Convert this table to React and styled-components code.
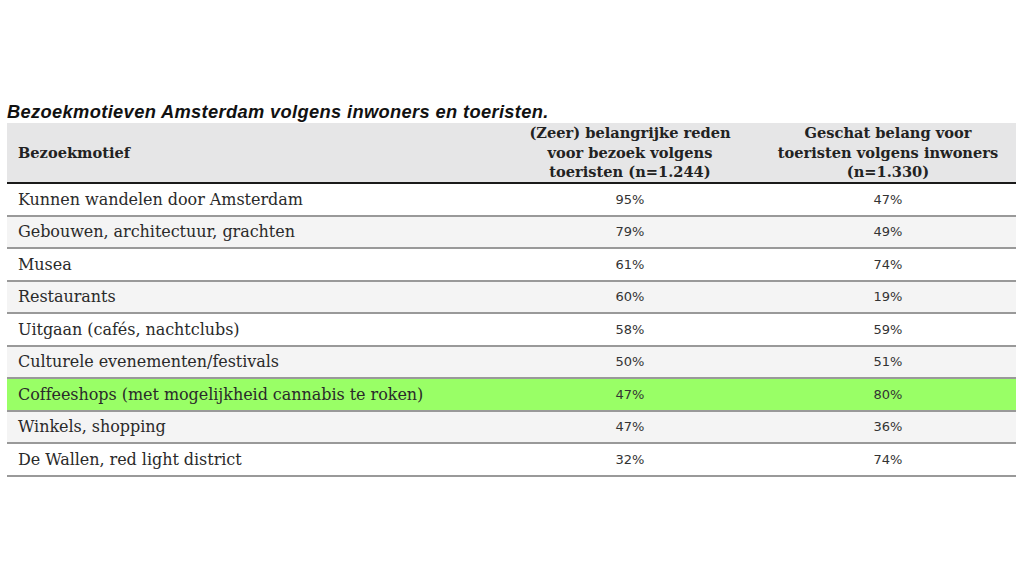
import React from "react";
import styled, { createGlobalStyle } from "styled-components";

const Global = createGlobalStyle`
  html, body { margin: 0; padding: 0; background: #fff; }
  body { width: 1030px; height: 580px; overflow: hidden; }
`;

const Page = styled.div`
  padding: 102px 14px 0 7px;
`;

const Title = styled.div`
  font-family: "Liberation Sans", Arial, sans-serif;
  font-weight: bold;
  font-style: italic;
  font-size: 18.3px;
  line-height: 20px;
  letter-spacing: 0.35px;
  color: #111;
  margin-bottom: 1px;
`;

const Table = styled.table`
  width: 1009px;
  border-collapse: collapse;
  table-layout: fixed;
`;

const HeadRow = styled.tr`
  background: #e6e6e7;
  border-bottom: 2px solid #1a1a1a;
`;

const Th = styled.th`
  font-family: "DejaVu Serif", "Liberation Serif", serif;
  font-weight: bold;
  font-size: 14.6px;
  line-height: 19.5px;
  color: #222;
  text-align: ${(p) => (p.$left ? "left" : "center")};
  padding: ${(p) => (p.$left ? "0 0 0 11px" : "0")};
  height: 59px;
  vertical-align: middle;
`;

const Row = styled.tr`
  background: ${(p) => (p.$hl ? "#99ff66" : p.$alt ? "#f4f4f4" : "#fff")};
  border-bottom: 2px solid #999;
`;

const Label = styled.td`
  font-family: "DejaVu Serif", "Liberation Serif", serif;
  font-size: 16px;
  color: #2a2a2a;
  padding: 0 0 0 11px;
  height: 30.5px;
  letter-spacing: -0.05px;
`;

const Num = styled.td`
  font-family: "DejaVu Sans", Verdana, sans-serif;
  font-size: 13px;
  color: #333;
  text-align: center;
  height: 30.5px;
  padding: 0;
`;

const rows = [
  ["Kunnen wandelen door Amsterdam", "95%", "47%"],
  ["Gebouwen, architectuur, grachten", "79%", "49%"],
  ["Musea", "61%", "74%"],
  ["Restaurants", "60%", "19%"],
  ["Uitgaan (cafés, nachtclubs)", "58%", "59%"],
  ["Culturele evenementen/festivals", "50%", "51%"],
  ["Coffeeshops (met mogelijkheid cannabis te roken)", "47%", "80%"],
  ["Winkels, shopping", "47%", "36%"],
  ["De Wallen, red light district", "32%", "74%"],
];

export default function App() {
  return (
    <>
      <Global />
      <Page>
        <Title>Bezoekmotieven Amsterdam volgens inwoners en toeristen.</Title>
        <Table>
          <colgroup>
            <col style={{ width: "493px" }} />
            <col style={{ width: "260px" }} />
            <col style={{ width: "256px" }} />
          </colgroup>
          <thead>
            <HeadRow>
              <Th $left>Bezoekmotief</Th>
              <Th>
                (Zeer) belangrijke reden
                <br />
                voor bezoek volgens
                <br />
                toeristen (n=1.244)
              </Th>
              <Th>
                Geschat belang voor
                <br />
                toeristen volgens inwoners
                <br />
                (n=1.330)
              </Th>
            </HeadRow>
          </thead>
          <tbody>
            {rows.map(([label, a, b], i) => (
              <Row key={label} $alt={i % 2 === 1} $hl={i === 6}>
                <Label>{label}</Label>
                <Num>{a}</Num>
                <Num>{b}</Num>
              </Row>
            ))}
          </tbody>
        </Table>
      </Page>
    </>
  );
}
